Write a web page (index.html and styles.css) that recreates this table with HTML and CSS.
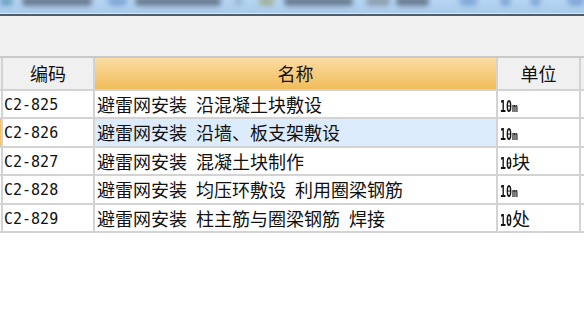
FILE: index.html
```html
<!DOCTYPE html>
<html lang="zh-CN">
<head>
<meta charset="utf-8">
<title>定额列表</title>
<link rel="stylesheet" href="styles.css">
</head>
<body>
<div class="toolbar">
  <span class="blob teal w13"></span>
  <span class="blob dark w70 ml9"></span>
  <span class="blob blue w21 ml15"></span>
  <span class="blob dark w86 ml7"></span>
  <span class="blob faint w9 ml13"></span>
  <span class="blob olive w17 ml15"></span>
  <span class="blob dark w69 ml9"></span>
  <span class="blob gray w24 ml13"></span>
  <span class="blob dark w33 ml6"></span>
  <span class="blob blue w19 ml30"></span>
  <span class="blob blue w11 ml22"></span>
  <span class="blob blue w11 ml19"></span>
  <span class="blob blue w18 ml26"></span>
</div>
<div class="panel"></div>
<div class="grid">
  <div class="c edge hd"></div>
  <div class="c hd gray">编码</div>
  <div class="c hd orange">名称</div>
  <div class="c hd gray">单位</div>
  <div class="c hd gray"></div>

  <div class="c edge"></div>
  <div class="c code">C2-825</div>
  <div class="c name">避雷网安装 沿混凝土块敷设</div>
  <div class="c unit"><span class="num"><span class="numi">10</span></span><span class="m">m</span></div>
  <div class="c"></div>

  <div class="c edge sel-edge"></div>
  <div class="c code">C2-826</div>
  <div class="c name sel">避雷网安装 沿墙、板支架敷设</div>
  <div class="c unit"><span class="num"><span class="numi">10</span></span><span class="m">m</span></div>
  <div class="c"></div>

  <div class="c edge"></div>
  <div class="c code">C2-827</div>
  <div class="c name">避雷网安装 混凝土块制作</div>
  <div class="c unit"><span class="num"><span class="numi">10</span></span>块</div>
  <div class="c"></div>

  <div class="c edge"></div>
  <div class="c code">C2-828</div>
  <div class="c name">避雷网安装 均压环敷设 利用圈梁钢筋</div>
  <div class="c unit"><span class="num"><span class="numi">10</span></span><span class="m">m</span></div>
  <div class="c"></div>

  <div class="c edge"></div>
  <div class="c code">C2-829</div>
  <div class="c name">避雷网安装 柱主筋与圈梁钢筋 焊接</div>
  <div class="c unit"><span class="num"><span class="numi">10</span></span>处</div>
  <div class="c"></div>
</div>
</body>
</html>
```
FILE: styles.css
```css
html, body {
  margin: 0;
  padding: 0;
  background: #ffffff;
}
body {
  width: 584px;
  height: 322px;
  overflow: hidden;
  font-family: "Noto Sans CJK SC", "DejaVu Sans", sans-serif;
  color: #111;
}
.toolbar {
  height: 13px;
  background: linear-gradient(#b6d5f3, #aacbeb);
  border-bottom: 1px solid #dbe7f3;
  display: flex;
  align-items: flex-start;
  overflow: hidden;
}
.blob {
  display: block;
  height: 9px;
  margin-top: -3px;
  border-radius: 4px;
  filter: blur(2.5px);
  flex: none;
}
.teal { background: #6fa4c6; }
.dark { background: #6b7d93; }
.blue { background: #7fa6d6; border-radius: 50%; }
.faint { background: #9dbbd8; }
.olive { background: #a2b29a; border-radius: 50%; }
.blob.gray { background: #8ea0b3; }
.w9 { width: 9px; } .w11 { width: 11px; } .w13 { width: 13px; } .w17 { width: 17px; }
.w18 { width: 18px; } .w19 { width: 19px; } .w21 { width: 21px; } .w24 { width: 24px; }
.w33 { width: 33px; } .w69 { width: 69px; } .w70 { width: 70px; } .w86 { width: 86px; }
.ml6 { margin-left: 6px; } .ml7 { margin-left: 7px; } .ml9 { margin-left: 9px; }
.ml13 { margin-left: 13px; } .ml15 { margin-left: 15px; } .ml19 { margin-left: 19px; }
.ml22 { margin-left: 22px; } .ml26 { margin-left: 26px; } .ml30 { margin-left: 30px; }

.panel {
  height: 40px;
  background: #f0f0f0;
  border-top: 2px solid #4e5c6d;
}
.grid {
  display: grid;
  grid-template-columns: 1px 90px 401px 81px 1fr;
  grid-template-rows: 31px repeat(5, 26.4px);
  column-gap: 2px;
  row-gap: 2px;
  background: #d3d3d3;
  border-top: 2px solid #c9c9c9;
  border-bottom: 2px solid #d3d3d3;
}
.c {
  background: #ffffff;
  white-space: nowrap;
  overflow: hidden;
  font-size: 18px;
  line-height: 26px;
}
.hd {
  line-height: 31px;
  text-align: center;
}
.hd.gray, .edge.hd { background: #f0f0f0; }
.hd.orange {
  background: linear-gradient(#fbdca3, #f1bd5a);
}
.code {
  font-family: "DejaVu Sans Mono", "Liberation Mono", monospace;
  font-size: 15px;
  padding-left: 1px;
  padding-top: 1px;
}
.name {
  padding-left: 2px;
  word-spacing: 5px;
}
.sel { background: #ddecfc; }
.sel-edge { background: #f1c36e; }
.unit {
  padding-left: 2px;
}
.num {
  display: inline-block;
  width: 12px;
  vertical-align: baseline;
}
.numi {
  display: inline-block;
  font-family: "DejaVu Sans Mono", "Liberation Mono", monospace;
  font-size: 16px;
  font-weight: bold;
  transform: scaleX(0.62);
  transform-origin: left center;
}
.m {
  font-family: "DejaVu Sans Mono", monospace;
  font-size: 13px;
  font-weight: bold;
  display: inline-block;
  transform: scaleX(0.75);
  transform-origin: left center;
}
```
